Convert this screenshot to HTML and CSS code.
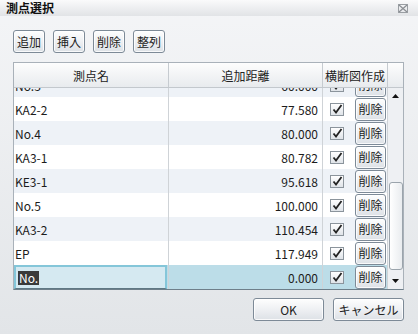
FILE: index.html
```html
<!DOCTYPE html>
<html lang="ja">
<head>
<meta charset="utf-8">
<link rel="stylesheet" href="styles.css">
</head>
<body>
<div class="dialog">
  <div class="titlebar">
    <span class="title">測点選択</span>
    <svg class="close" width="10" height="9" viewBox="0 0 10 9">
      <rect x="0.5" y="0.5" width="9" height="8" fill="none" stroke="#9a9ea3"/>
      <path d="M1 1 L9 8 M9 1 L1 8" stroke="#8a8e93" stroke-width="1.2"/>
    </svg>
  </div>
  <div class="toolbar">
    <button class="btn tb">追加</button>
    <button class="btn tb">挿入</button>
    <button class="btn tb">削除</button>
    <button class="btn tb">整列</button>
  </div>
  <div class="grid">
    <div class="ghead">
      <div class="hc c1">測点名</div>
      <div class="hc c2">追加距離</div>
      <div class="hc c3">横断図作成</div>
      <div class="hc c4"></div>
    </div>
    <div class="gbody">
      <div class="rows">
        <div class="rows-inner">
          <div class="row alt"><div class="cell c1">No.3</div><div class="cell c2">60.000</div><div class="cell c3"><span class="chk"><svg width="11" height="10" viewBox="0 0 11 10"><path d="M1.5 5.5 L4 8.5 L9.5 1" fill="none" stroke="#222" stroke-width="1.8"/></svg></span><button class="btn del">削除</button></div></div>
          <div class="row"><div class="cell c1">KA2-2</div><div class="cell c2">77.580</div><div class="cell c3"><span class="chk"><svg width="11" height="10" viewBox="0 0 11 10"><path d="M1.5 5.5 L4 8.5 L9.5 1" fill="none" stroke="#222" stroke-width="1.8"/></svg></span><button class="btn del">削除</button></div></div>
          <div class="row alt"><div class="cell c1">No.4</div><div class="cell c2">80.000</div><div class="cell c3"><span class="chk"><svg width="11" height="10" viewBox="0 0 11 10"><path d="M1.5 5.5 L4 8.5 L9.5 1" fill="none" stroke="#222" stroke-width="1.8"/></svg></span><button class="btn del">削除</button></div></div>
          <div class="row"><div class="cell c1">KA3-1</div><div class="cell c2">80.782</div><div class="cell c3"><span class="chk"><svg width="11" height="10" viewBox="0 0 11 10"><path d="M1.5 5.5 L4 8.5 L9.5 1" fill="none" stroke="#222" stroke-width="1.8"/></svg></span><button class="btn del">削除</button></div></div>
          <div class="row alt"><div class="cell c1">KE3-1</div><div class="cell c2">95.618</div><div class="cell c3"><span class="chk"><svg width="11" height="10" viewBox="0 0 11 10"><path d="M1.5 5.5 L4 8.5 L9.5 1" fill="none" stroke="#222" stroke-width="1.8"/></svg></span><button class="btn del">削除</button></div></div>
          <div class="row"><div class="cell c1">No.5</div><div class="cell c2">100.000</div><div class="cell c3"><span class="chk"><svg width="11" height="10" viewBox="0 0 11 10"><path d="M1.5 5.5 L4 8.5 L9.5 1" fill="none" stroke="#222" stroke-width="1.8"/></svg></span><button class="btn del">削除</button></div></div>
          <div class="row alt"><div class="cell c1">KA3-2</div><div class="cell c2">110.454</div><div class="cell c3"><span class="chk"><svg width="11" height="10" viewBox="0 0 11 10"><path d="M1.5 5.5 L4 8.5 L9.5 1" fill="none" stroke="#222" stroke-width="1.8"/></svg></span><button class="btn del">削除</button></div></div>
          <div class="row"><div class="cell c1">EP</div><div class="cell c2">117.949</div><div class="cell c3"><span class="chk"><svg width="11" height="10" viewBox="0 0 11 10"><path d="M1.5 5.5 L4 8.5 L9.5 1" fill="none" stroke="#222" stroke-width="1.8"/></svg></span><button class="btn del">削除</button></div></div>
          <div class="row sel"><div class="cell c1"><div class="edit"><span class="selected-text">No.</span></div></div><div class="cell c2">0.000</div><div class="cell c3"><span class="chk"><svg width="11" height="10" viewBox="0 0 11 10"><path d="M1.5 5.5 L4 8.5 L9.5 1" fill="none" stroke="#222" stroke-width="1.8"/></svg></span><button class="btn del">削除</button></div></div>
        </div>
      </div>
      <div class="vscroll">
        <div class="arrow up"><svg width="7" height="4" viewBox="0 0 7 4"><path d="M0 4 L3.5 0 L7 4 Z" fill="#111"/></svg></div>
        <div class="track"><div class="thumb"></div></div>
        <div class="arrow down"><svg width="7" height="4" viewBox="0 0 7 4"><path d="M0 0 L3.5 4 L7 0 Z" fill="#111"/></svg></div>
      </div>
    </div>
  </div>
  <div class="footer">
    <button class="btn fb">OK</button>
    <button class="btn fb">キャンセル</button>
  </div>
</div>
</body>
</html>
```

FILE: styles.css
```css
* { box-sizing: border-box; }
html, body { margin: 0; padding: 0; }
body {
  font-family: "Noto Sans CJK JP", "Noto Sans", sans-serif;
  font-size: 12px;
  color: #1c1c1c;
}
.dialog {
  width: 418px;
  height: 334px;
  display: flex;
  flex-direction: column;
  background: linear-gradient(#f4f5f7, #e2e5e8);
  overflow: hidden;
}
.titlebar {
  height: 16px;
  display: flex;
  align-items: center;
  justify-content: space-between;
  padding: 0 10px 0 6px;
  background: linear-gradient(#fafafb, #e1e3e6);
}
.title {
  font-weight: bold;
  font-size: 12px;
  line-height: 16px;
  color: #111;
}
.close { display: block; }
.toolbar {
  display: flex;
  gap: 8px;
  padding: 14px 0 0 13px;
}
.btn {
  font-family: "Noto Sans CJK JP", "Noto Sans", sans-serif;
  font-size: 12px;
  color: #222;
  border: 1px solid #7d8a97;
  border-radius: 3px;
  background: linear-gradient(#fefefe, #eef0f3 50%, #dde1e6);
  box-shadow: inset 0 0 0 1px rgba(255,255,255,0.8);
  padding: 0;
  margin: 0;
  line-height: 1;
  display: flex;
  align-items: center;
  justify-content: center;
}
.tb { width: 32px; height: 23px; }
.grid {
  margin: 9px 0 0 13px;
  width: 391px;
  border: 1px solid #a9b1b9;
  border-bottom-color: #6e7f8a;
  background: #fff;
  display: flex;
  flex-direction: column;
}
.ghead {
  display: grid;
  grid-template-columns: 155px 154px 65px 15px;
  height: 25px;
  border-bottom: 1px solid #c3c8cd;
  background: linear-gradient(#fdfdfd, #e8ebee);
}
.hc {
  display: flex;
  align-items: center;
  justify-content: center;
  border-right: 1px solid #c6cbd0;
  color: #222;
}
.hc.c4 { border-right: none; }
.gbody {
  display: flex;
  height: 201px;
}
.rows {
  width: 374px;
  overflow: hidden;
}
.rows-inner { margin-top: -15px; }
.row {
  display: grid;
  grid-template-columns: 155px 154px 65px;
  height: 24px;
  background: #fff;
}
.row.alt { background: #eef2f7; }
.row.sel { background: #bcdde8; }
.cell {
  border-right: 1px solid #cfd3d7;
  display: flex;
  align-items: center;
  white-space: nowrap;
}
.cell.c1 { padding-left: 1px; }
.cell.c2 { justify-content: flex-end; padding-right: 4px; }
.cell.c3 { padding-left: 7px; gap: 11px; }
.chk {
  width: 14px;
  height: 13px;
  border: 1px solid #8b949c;
  background: linear-gradient(#ffffff, #dfe3e8);
  display: flex;
  align-items: center;
  justify-content: center;
}
.chk svg { display: block; }
.del { width: 31px; height: 23px; }
.edit {
  width: 153px;
  height: 24px;
  margin-left: -1px;
  border: 2px solid #84c6d9;
  border-bottom: 1px solid #5f7884;
  background: #d5e9f1;
  display: flex;
  align-items: center;
  padding-left: 2px;
}
.selected-text {
  background: #3a3a3a;
  color: #fff;
  line-height: 14px;
  padding: 0 1px;
}
.vscroll {
  width: 15px;
  background: #eef0f3;
  display: flex;
  flex-direction: column;
}
.arrow {
  height: 16px;
  display: flex;
  align-items: center;
  justify-content: center;
}
.arrow svg { display: block; }
.track {
  flex: 1;
  display: flex;
  flex-direction: column;
  align-items: center;
}
.thumb {
  margin-top: 78px;
  width: 14px;
  height: 88px;
  border: 1px solid #9ba4ac;
  border-radius: 3px;
  background: linear-gradient(90deg, #ffffff, #e9ecef);
}
.footer {
  display: flex;
  justify-content: flex-end;
  gap: 9px;
  padding: 8px 14px 0 0;
}
.fb { width: 71px; height: 23px; }
```
